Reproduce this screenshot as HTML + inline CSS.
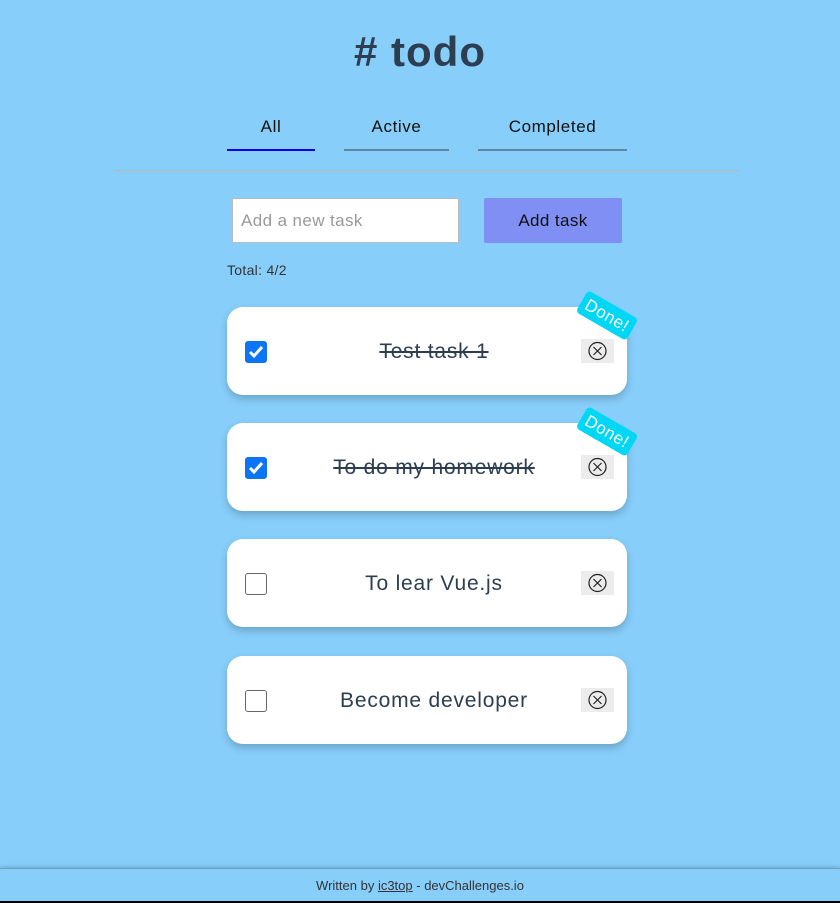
<!DOCTYPE html>
<html><head><style>
body{margin:0;width:840px;height:902px;background:#87cefa;font-family:"Liberation Sans",sans-serif;position:relative;overflow:hidden;color:#2c3e50}
.abs{position:absolute}
h1{position:absolute;top:28px;left:0;width:840px;text-align:center;margin:0;font-size:42px;font-weight:bold;color:#2c3e50;letter-spacing:1px}
.tab{position:absolute;top:117px;font-size:17px;color:#111;text-align:center;height:32px;border-bottom:2px solid #5f87a5;letter-spacing:0.6px}
.card{position:absolute;left:227px;width:400px;height:88px;background:#fff;border-radius:16px;box-shadow:0 4px 8px rgba(0,0,0,0.2)}
.cb{position:absolute;left:18px;top:34px;width:20px;height:20px;border:1px solid #666;border-radius:3px;background:#fff}
.cb.on{background:#0b75f5;border-color:#0b75f5}
.txt{position:absolute;left:60px;width:294px;top:33px;text-align:center;font-size:21px;color:#2c3e50;letter-spacing:0.8px}
.txt.done{text-decoration:line-through}
.del{position:absolute;left:354px;top:32px;width:33px;height:24px;background:#ececec}
.badge{position:absolute;left:351px;top:-4px;width:58px;height:25px;background:#00d7f5;color:#fff;font-size:17px;line-height:25px;text-align:center;border-radius:4px;transform:rotate(30deg);letter-spacing:0.5px}
</style></head><body>
<h1># todo</h1>
<div class="tab" style="left:227px;width:88px;border-color:#0000ee">All</div>
<div class="tab" style="left:344px;width:105px">Active</div>
<div class="tab" style="left:478px;width:149px">Completed</div>
<div class="abs" style="left:115px;top:170px;width:625px;height:1px;background:#b8b8b8"></div>
<div class="abs" style="left:232px;top:198px;background:#fff;border:1px solid #bbb;font-size:17px;color:#999;line-height:43px;padding-left:8px;box-sizing:border-box;width:227px;height:45px;letter-spacing:0.4px">Add a new task</div>
<div class="abs" style="left:484px;top:198px;width:138px;height:45px;background:#7f8ff4;border-radius:2px;font-size:17px;color:#111;text-align:center;line-height:45px;letter-spacing:0.4px">Add task</div>
<div class="abs" style="left:227px;top:262px;font-size:14px;color:#333;letter-spacing:0.3px">Total: 4/2</div>

<div class="card" style="top:307px"><div class="cb on"><svg width="20" height="20"><path d="M4 10l4 4 8-9" stroke="#fff" stroke-width="3" fill="none"/></svg></div><div class="txt done">Test task 1</div><div class="del"><svg width="33" height="24"><circle cx="16.5" cy="12" r="8.5" fill="none" stroke="#222" stroke-width="1.2"/><path d="M12.5 8l8 8M20.5 8l-8 8" stroke="#222" stroke-width="1.2"/></svg></div><div class="badge">Done!</div></div>
<div class="card" style="top:423px"><div class="cb on"><svg width="20" height="20"><path d="M4 10l4 4 8-9" stroke="#fff" stroke-width="3" fill="none"/></svg></div><div class="txt done">To do my homework</div><div class="del"><svg width="33" height="24"><circle cx="16.5" cy="12" r="8.5" fill="none" stroke="#222" stroke-width="1.2"/><path d="M12.5 8l8 8M20.5 8l-8 8" stroke="#222" stroke-width="1.2"/></svg></div><div class="badge">Done!</div></div>
<div class="card" style="top:539px"><div class="cb"></div><div class="txt">To lear Vue.js</div><div class="del"><svg width="33" height="24"><circle cx="16.5" cy="12" r="8.5" fill="none" stroke="#222" stroke-width="1.2"/><path d="M12.5 8l8 8M20.5 8l-8 8" stroke="#222" stroke-width="1.2"/></svg></div></div>
<div class="card" style="top:656px"><div class="cb"></div><div class="txt">Become developer</div><div class="del"><svg width="33" height="24"><circle cx="16.5" cy="12" r="8.5" fill="none" stroke="#222" stroke-width="1.2"/><path d="M12.5 8l8 8M20.5 8l-8 8" stroke="#222" stroke-width="1.2"/></svg></div></div>

<div class="abs" style="left:0;top:868px;width:840px;height:32px;border-top:1px solid #6a9fc0;box-shadow:0 -2px 3px rgba(0,0,0,0.12);border-bottom:2px solid #000;text-align:center;font-size:13px;line-height:33px;color:#333">Written by <u>ic3top</u> - devChallenges.io</div>
</body></html>
